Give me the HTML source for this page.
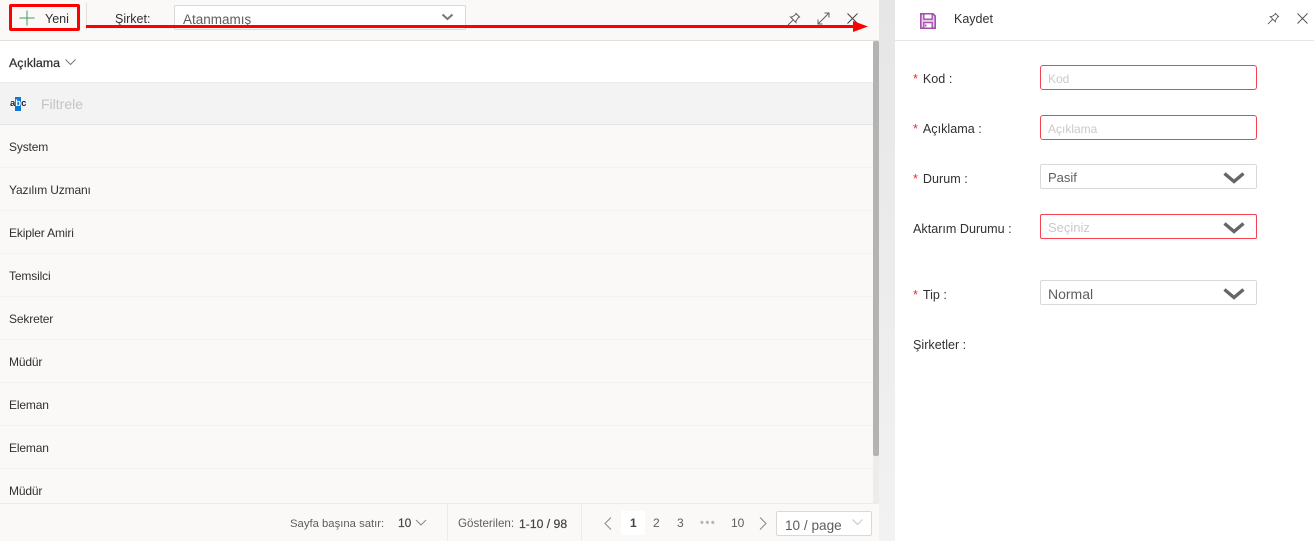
<!DOCTYPE html>
<html lang="tr"><head><meta charset="utf-8"><title>Kaydet</title>
<style>
*{box-sizing:border-box}
html,body{margin:0;padding:0;width:1314px;height:541px;overflow:hidden;background:#fff}
body{position:relative;font-family:"Liberation Sans",sans-serif;font-size:12px;color:#323130}
.a{position:absolute}
.t{position:absolute;white-space:nowrap;line-height:16px}
.row{position:absolute;left:0;width:873px;height:43px;border-bottom:1px solid #f3f2f0}
.row span{position:absolute;left:9px;top:14px;line-height:16px;letter-spacing:-.15px}
.in{position:absolute;left:1040px;width:217px;height:25px;border:1px solid #d9d9d9;border-radius:2px;font-size:13px;line-height:26px;padding-left:7px;color:#605e5c;background:#fff}
.err{border-color:#f5424f}
.ph{color:#c9c9c9}
.lab{position:absolute;left:913px;line-height:16px;white-space:nowrap;color:#323130;font-size:12.6px}
.star{color:#f5222d;margin-right:5px}
svg{position:absolute;overflow:visible}
</style></head><body>
<div class="a" style="left:0;top:0;width:879px;height:541px;background:#faf9f8"></div>
<div class="a" style="left:879px;top:0;width:16px;height:541px;background:linear-gradient(180deg,#e6e6e6,#f3f2f2)"></div>
<div class="a" style="left:0;top:40px;width:879px;height:1px;background:#e1dfdd"></div>
<div class="a" style="left:895px;top:40px;width:419px;height:1px;background:#e6e6e6"></div>

<div class="a" style="left:9px;top:4px;width:71px;height:27px;border:3px solid #f00;border-radius:2px;z-index:3"></div>
<svg style="left:19px;top:10px" width="16" height="16" viewBox="0 0 16 16"><path d="M8 0.5V15.5" stroke="#3f9c5f" stroke-width="1"/><path d="M0.5 8H15.5" stroke="#3f9c5f" stroke-width="1"/></svg>
<div class="t" style="left:45px;top:11px;font-size:12.5px">Yeni</div>
<div class="a" style="left:86px;top:3px;width:1px;height:27px;background:#e1dfdd"></div>
<div class="t" style="left:115px;top:11px;font-size:12.5px">Şirket:</div>
<div class="a" style="left:174px;top:5px;width:292px;height:25px;background:#fff;border:1px solid #d9d9d9;border-radius:2px"></div>
<div class="t" style="left:183px;top:12px;font-size:13.5px;color:#605e5c">Atanmamış</div>
<svg style="left:441px;top:13px" width="13" height="9" viewBox="0 0 13 9"><path d="M1.5 1.5L6.5 6L11.5 1.5" fill="none" stroke="#777" stroke-width="2"/></svg>

<svg style="left:787px;top:12px" width="14" height="14" viewBox="0 0 14 14"><path d="M8.5 1L13 5.5M9.5 2L5 5L3.5 5L9 10.5V9L12 4.5M6.2 7.8L1 13" fill="none" stroke="#605e5c" stroke-width="1"/></svg>
<svg style="left:817px;top:12px" width="13" height="13" viewBox="0 0 13 13"><path d="M1 12L12 1M7.5 1H12V5.5M1 7.5V12H5.5" fill="none" stroke="#605e5c" stroke-width="1"/></svg>
<svg style="left:847px;top:13px" width="11" height="11" viewBox="0 0 11 11"><path d="M.5 .5L10.5 10.5M10.5 .5L.5 10.5" fill="none" stroke="#444" stroke-width="1"/></svg>

<div class="a" style="left:86px;top:25px;width:768px;height:3px;background:#f00;z-index:4"></div>
<svg style="left:853px;top:21px;z-index:4" width="15" height="11" viewBox="0 0 15 11"><path d="M0 0L15 5.5L0 11Z" fill="#f00"/></svg>

<div class="a" style="left:0;top:41px;width:873px;height:42px;background:#fff;border-bottom:1px solid #edebe9"></div>
<div class="t" style="left:9px;top:55px;font-size:12.4px;-webkit-text-stroke:.25px #323130">Açıklama</div>
<svg style="left:65px;top:59px" width="11" height="6" viewBox="0 0 11 6"><path d="M.5 .5L5.5 5.5L10.5 .5" fill="none" stroke="#7a7977" stroke-width="1"/></svg>

<div class="a" style="left:0;top:83px;width:873px;height:42px;background:#f3f3f3;border-bottom:1px solid #e6e4e2"></div>
<div class="a" style="left:15px;top:97px;width:6px;height:14px;background:#0f78d4"></div>
<div class="t" style="left:10px;top:96px;font-size:9.5px;font-weight:700;color:#222">a<span style="color:#fff">b</span>c</div>
<div class="t" style="left:41px;top:96px;font-size:14px;color:#c4c4c4">Filtrele</div>

<div class="row" style="top:125px"><span>System</span></div>
<div class="row" style="top:168px"><span>Yazılım Uzmanı</span></div>
<div class="row" style="top:211px"><span>Ekipler Amiri</span></div>
<div class="row" style="top:254px"><span>Temsilci</span></div>
<div class="row" style="top:297px"><span>Sekreter</span></div>
<div class="row" style="top:340px"><span>Müdür</span></div>
<div class="row" style="top:383px"><span>Eleman</span></div>
<div class="row" style="top:426px"><span>Eleman</span></div>
<div class="row" style="top:469px;border-bottom:0;height:34px"><span>Müdür</span></div>

<div class="a" style="left:873px;top:41px;width:6px;height:462px;background:#ececec"></div>
<div class="a" style="left:873px;top:41px;width:6px;height:415px;background:#b3b3b3;border-radius:2px"></div>

<div class="a" style="left:0;top:503px;width:879px;height:38px;background:#faf9f8;border-top:1px solid #edebe9"></div>
<div class="a" style="left:447px;top:504px;width:1px;height:37px;background:#edebe9"></div>
<div class="a" style="left:581px;top:504px;width:1px;height:37px;background:#edebe9"></div>
<div class="t" style="left:290px;top:516px;font-size:11.3px;color:#605e5c">Sayfa başına satır:</div>
<div class="t" style="left:398px;top:515px;font-size:12px;color:#444;-webkit-text-stroke:.15px #444">10</div>
<svg style="left:415px;top:519px" width="12" height="7" viewBox="0 0 12 7"><path d="M1 1L6 6L11 1" fill="none" stroke="#8a8886"/></svg>
<div class="t" style="left:458px;top:516px;font-size:11.6px;color:#605e5c">Gösterilen:</div>
<div class="t" style="left:519px;top:516px;font-size:12.2px;color:#444;-webkit-text-stroke:.2px #444">1-10 / 98</div>
<svg style="left:604px;top:517px" width="8" height="13" viewBox="0 0 8 13"><path d="M7 .5L1 6.5L7 12.5" fill="none" stroke="#8a8886"/></svg>
<div class="a" style="left:621px;top:511px;width:24px;height:24px;background:#fff"></div>
<div class="t" style="left:630px;top:515px;font-weight:700;color:#444">1</div>
<div class="t" style="left:653px;top:515px;color:#605e5c">2</div>
<div class="t" style="left:677px;top:515px;color:#605e5c">3</div>
<div class="t" style="left:700px;top:515px;color:#b5b5b5;letter-spacing:1.6px;font-size:11px;font-weight:700">•••</div>
<div class="t" style="left:731px;top:515px;color:#605e5c">10</div>
<svg style="left:759px;top:517px" width="8" height="13" viewBox="0 0 8 13"><path d="M1 .5L7 6.5L1 12.5" fill="none" stroke="#8a8886"/></svg>
<div class="a" style="left:776px;top:511px;width:96px;height:25px;background:#fff;border:1px solid #d9d9d9;border-radius:2px"></div>
<div class="t" style="left:785px;top:518px;font-size:13.6px;color:#605e5c">10 / page</div>
<svg style="left:852px;top:519px" width="11" height="6" viewBox="0 0 11 6"><path d="M.5 .5L5.5 5.5L10.5 .5" fill="none" stroke="#c8c8c8"/></svg>

<svg style="left:920px;top:13px" width="16" height="16" viewBox="0 0 16 16"><path d="M.8 .8H13L15.2 3V15.2H.8Z" fill="#e9cdea" stroke="#a44fb0" stroke-width="1.6"/><path d="M3.8 .8V6.2H12.2V.8Z" fill="#fff" stroke="#a44fb0" stroke-width="1.4"/><path d="M3.8 15.2V9.6H12.2V15.2Z" fill="#fff" stroke="#a44fb0" stroke-width="1.4"/><path d="M5.8 11.5V13.5" stroke="#555" stroke-width="1.2"/></svg>
<div class="t" style="left:954px;top:11px;font-size:12.5px">Kaydet</div>
<svg style="left:1267px;top:12px" width="13" height="13" viewBox="0 0 14 14"><path d="M8.5 1L13 5.5M9.5 2L5 5L3.5 5L9 10.5V9L12 4.5M6.2 7.8L1 13" fill="none" stroke="#605e5c" stroke-width="1"/></svg>
<svg style="left:1297px;top:13px" width="11" height="11" viewBox="0 0 11 11"><path d="M.5 .5L10.5 10.5M10.5 .5L.5 10.5" fill="none" stroke="#555" stroke-width="1"/></svg>

<div class="lab" style="top:71px"><span class="star">*</span>Kod :</div>
<div class="in err ph" style="top:65px;border-radius:3px;font-size:12px">Kod</div>
<div class="lab" style="top:121px"><span class="star">*</span>Açıklama :</div>
<div class="in err ph" style="top:115px;border-radius:3px;font-size:12px">Açıklama</div>
<div class="lab" style="top:171px"><span class="star">*</span>Durum :</div>
<div class="in" style="top:164px">Pasif</div>
<div class="lab" style="top:221px">Aktarım Durumu :</div>
<div class="in err ph" style="top:214px">Seçiniz</div>
<div class="lab" style="top:287px"><span class="star">*</span>Tip :</div>
<div class="in" style="top:280px;font-size:14px">Normal</div>
<div class="lab" style="top:337px">Şirketler :</div>
<svg style="left:1223px;top:172px" width="22" height="12" viewBox="0 0 22 12"><path d="M1.5 1.5L11 9.5L20.5 1.5" fill="none" stroke="#666" stroke-width="3.4"/></svg>
<svg style="left:1223px;top:222px" width="22" height="12" viewBox="0 0 22 12"><path d="M1.5 1.5L11 9.5L20.5 1.5" fill="none" stroke="#666" stroke-width="3.4"/></svg>
<svg style="left:1223px;top:288px" width="22" height="12" viewBox="0 0 22 12"><path d="M1.5 1.5L11 9.5L20.5 1.5" fill="none" stroke="#666" stroke-width="3.4"/></svg>
</body></html>
